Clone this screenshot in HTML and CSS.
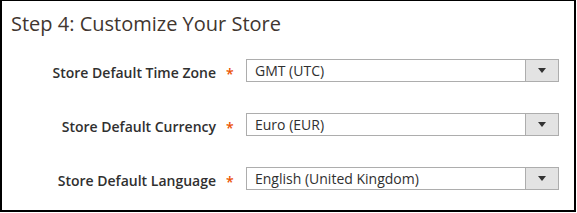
FILE: index.html
```html
<!DOCTYPE html>
<html>
<head>
<meta charset="utf-8">
<link rel="stylesheet" href="styles.css">
</head>
<body>
<div class="panel">
  <h2 class="title">Step 4: Customize Your Store</h2>
  <div class="form">
    <div class="row">
      <label class="label">Store Default Time Zone</label>
      <span class="req">*</span>
      <div class="select"><span class="value">GMT (UTC)</span><span class="btn"><span class="arrow"></span></span></div>
    </div>
    <div class="row">
      <label class="label">Store Default Currency</label>
      <span class="req">*</span>
      <div class="select"><span class="value">Euro (EUR)</span><span class="btn"><span class="arrow"></span></span></div>
    </div>
    <div class="row">
      <label class="label">Store Default Language</label>
      <span class="req">*</span>
      <div class="select"><span class="value">English (United Kingdom)</span><span class="btn"><span class="arrow"></span></span></div>
    </div>
  </div>
</div>
</body>
</html>
```
FILE: styles.css
```css
* { box-sizing: border-box; }
html, body { margin: 0; padding: 0; background: #fff; }
body { font-family: "Open Sans", "Liberation Sans", sans-serif; }
.panel {
  width: 576px;
  height: 212px;
  border-style: solid;
  border-color: #000;
  border-width: 1px 2px 2px 2px;
  padding: 8px 0 0 9px;
}
.title {
  margin: 0;
  font-size: 20px;
  line-height: 30px;
  font-weight: 400;
  color: #41362f;
}
.form { margin-top: 20px; display: flex; flex-direction: column; gap: 31px; }
.row {
  display: grid;
  grid-template-columns: 205px 30px 313px;
  height: 23px;
}
.label {
  text-align: right;
  font-size: 14px;
  font-weight: 600;
  color: #303030;
  line-height: 23px;
  padding-top: 2px;
}
.req {
  color: #eb5202;
  font-size: 14px;
  font-weight: 600;
  line-height: 23px;
  padding-top: 3px;
  padding-left: 10px;
}
.select {
  display: flex;
  border: 1px solid #adadad;
  height: 23px;
  background: #fff;
}
.value {
  flex: 1;
  font-size: 14px;
  line-height: 21px;
  color: #303030;
  padding-left: 8px;
}
.btn {
  width: 33px;
  background: #e3e3e3;
  border-left: 1px solid #adadad;
  display: flex;
  align-items: center;
  justify-content: center;
}
.arrow {
  width: 0; height: 0;
  border-left: 4px solid transparent;
  border-right: 4px solid transparent;
  border-top: 5px solid #333;
}
```
